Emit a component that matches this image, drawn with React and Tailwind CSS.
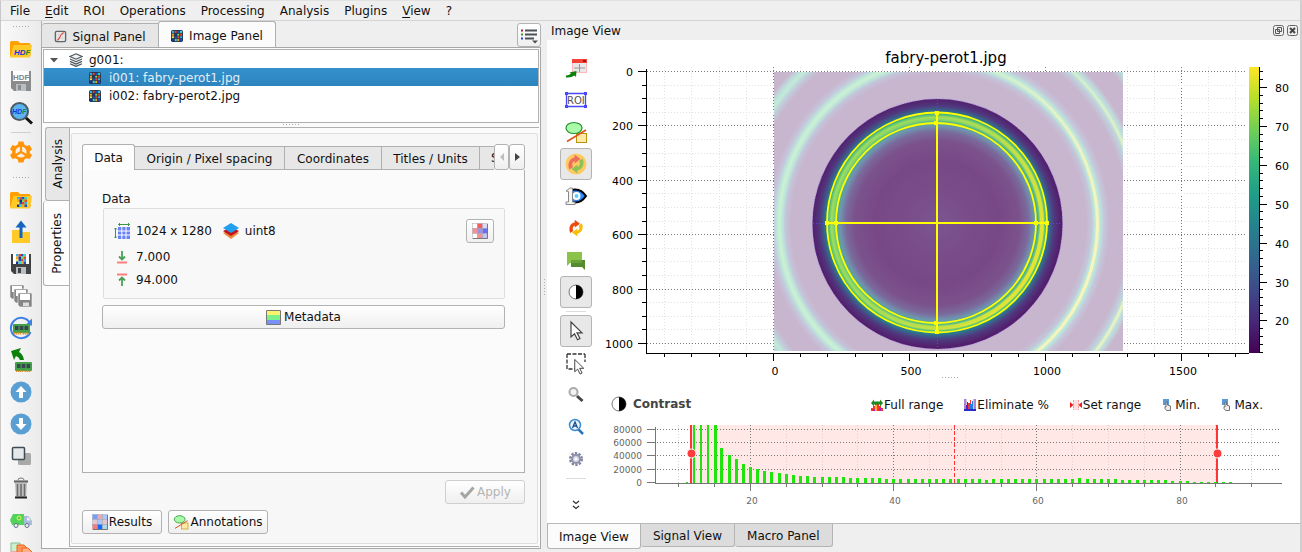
import React, { useState } from 'react';
import clsx from 'clsx';

const range = (n, from = 0) => Array.from({ length: n }, (_, i) => i + from);

const Icon = ({ size = 24, box = 24, className, children }) => (
  <svg width={size} height={size} viewBox={`0 0 ${box} ${box}`} className={clsx('shrink-0', className)} fill="none" aria-hidden="true">
    {children}
  </svg>
);

const MOSAIC = ['#2fb4e8', '#e8442f', '#1d4fc4', '#3ad6d0', '#f5a623', '#1c2f8f', '#6fe04b', '#e8442f', '#f7e04a', '#1d4fc4', '#e8442f', '#2fb4e8', '#1c2f8f', '#3ad6d0', '#f5a623', '#1d4fc4'];

const Mosaic = ({ x = 0, y = 0, cell = 3 }) =>
  MOSAIC.map((c, i) => <rect key={i} x={x + (i % 4) * cell} y={y + Math.floor(i / 4) * cell} width={cell} height={cell} fill={c} />);

/* ---- small icons ---- */

const SignalIcon = () => (
  <Icon size={13} box={14}>
    <rect x="1.5" y="1.5" width="11" height="11" rx="1.5" fill="#ececec" stroke="#5d666c" strokeWidth="1.5" />
    <path d="M5 2v10M9 2v10M2 5h10M2 9h10" stroke="#cfcfcf" strokeWidth=".6" />
    <path d="M3 11c4 0 3-8 8-8" stroke="#e8483c" strokeWidth="1.2" />
  </Icon>
);

const ImageIcon = () => (
  <Icon size={12} box={14}>
    <rect width="14" height="14" rx="2" fill="#23324a" />
    <Mosaic x={1} y={1} />
    <path d="M1 4h12M1 7h12M1 10h12M4 1v12M7 1v12M10 1v12" stroke="#23324a" strokeWidth=".7" />
  </Icon>
);

const LayersIcon = () => (
  <Icon size={14} box={14}>
    <path d="M7 .8l6 2.7-6 2.7-6-2.7zM1 6l6 2.7L13 6M1 8.4l6 2.7 6-2.7M1 10.7l6 2.7 6-2.7" stroke="#4c565c" strokeWidth="1.2" fill="#f2f2f2" />
  </Icon>
);

const ListIcon = () => (
  <Icon size={18} box={18}>
    <path d="M5 4.5h12M5 8.5h12M5 12.5h9" stroke="#4b5257" strokeWidth="2" />
    <path d="M1 4.5h2" stroke="#b01c2e" strokeWidth="2" />
    <path d="M1 8.5h2" stroke="#2aa02a" strokeWidth="2" />
    <path d="M1 12.5h2" stroke="#2c3ce0" strokeWidth="2" />
    <path d="M12 14.5h6l-3 3z" fill="#4b5257" />
  </Icon>
);

const ContrastIcon = ({ size = 16 }) => (
  <Icon size={size} box={16}>
    <circle cx="8" cy="8" r="7" fill="#fff" stroke="#777" />
    <path d="M8 1a7 7 0 0 1 0 14z" fill="#000" />
  </Icon>
);

const ShapeIcon = () => (
  <>
    <rect x="12.500" y="13.500" width="10" height="9" fill="#ffe9a8" stroke="#b8940c" />
    <ellipse cx="10" cy="8" rx="8" ry="5.500" fill="#a9fbaa" stroke="#23902c" strokeWidth="1.200" />
    <path d="M3 21.500L22 10" stroke="#d9541e" strokeWidth="1.500" />
  </>
);

const CycleIcon = ({ a, b }) => (
  <>
    <path d="M5.500 17.500C3.500 14 4 7 10.500 5.500V2.500L16.500 7l-6 4.500V9C8 10 7.500 12.500 9 15z" fill={a} />
    <path d="M18.500 6.500c2 3.500 1.500 10.500-5 12v3L7.500 17l6-4.500V15c2.500-1 3-3.500 1.500-6z" fill={b} />
  </>
);

const RamIcon = () => (
  <>
    <rect x="4" y="8" width="17" height="9" rx="1" fill="#43a047" />
    <path d="M6 10h3.500v4H6zM10.800 10h3.500v4h-3.500zM15.600 10h3.500v4h-3.500z" fill="#37474f" />
    <path d="M5 17.500h7M13.500 17.500H20" stroke="#e0912b" strokeWidth="2" strokeDasharray="1.500 .5" />
  </>
);

const Folder = () => (
  <>
    <path d="M1 5.500Q1 4 2.500 4H9l2 2h9q1.500 0 1.500 1.500V19H1z" fill="#ffa000" />
    <path d="M4.500 8H23l-2 12.500H1z" fill="#ffca28" />
  </>
);

const HdfText = ({ x, y, size = 8 }) => (
  <g fontFamily="Liberation Sans" fontStyle="italic" fontWeight="bold" fontSize={size}>
    <text x={x} y={y} fill="#1635e0">HD<tspan fill="#1b8a2c">F</tspan></text>
  </g>
);

const Floppy = ({ fill = '#424242', children }) => (
  <>
    <path d="M2 2h20v20H5l-3-3z" fill={fill} />
    <rect x="4" y="2" width="16" height="10" fill="#fff" />
    <rect x="7" y="15" width="10" height="7" fill="#b9bec2" />
    <rect x="9" y="16" width="3" height="5" fill={fill} />
    {children}
  </>
);

/* ---- main toolbar ---- */

const FILE_TOOLS = [
  ['Open HDF5', <><Folder /><HdfText x={5} y={18} size={8} /></>],
  ['Save HDF5', <Floppy fill="#8b8b8b"><text x="4" y="10.500" fontFamily="Liberation Sans" fontWeight="bold" fontSize="8" fill="#858585">HDF</text></Floppy>],
  ['Browse HDF5', <>
    <path d="M16 16l7 6.500" stroke="#111" strokeWidth="3" />
    <circle cx="10.500" cy="10.500" r="8.500" fill="#5bb4f0" stroke="#4d5a61" strokeWidth="2" />
    <HdfText x={3} y={13} size={7} />
  </>],
];

const SETTINGS_TOOLS = [
  ['Settings', <>
    <path d="M9.500 1.500h5l.7 3 2.500 1.400 2.900-.9 2.400 4.200-2.200 2v1.700l2.200 2-2.400 4.200-2.900-.9-2.500 1.400-.7 3h-5l-.7-3-2.500-1.400-2.900.9L1 14.900l2.200-2v-1.700L1 9.200 3.400 5l2.900.9 2.500-1.400z" fill="#ff9408" />
    <circle cx="12" cy="12" r="5.500" fill="#f3efe8" />
    <path d="M12 12V6M12 12l5 3M12 12l-5 3" stroke="#ff9408" strokeWidth="2.200" />
  </>],
];

const DATA_TOOLS = [
  ['Open image', <><Folder /><Mosaic x={8} y={9} cell={2.5} /></>],
  ['Import', <>
    <path d="M3 10h8l2 2h8v11H3z" fill="#ffca28" />
    <path d="M12 18V5" stroke="#1565c0" strokeWidth="3" />
    <path d="M6.500 7.500L12 .500l5.500 7z" fill="#1565c0" />
  </>],
  ['Save image', <Floppy><Mosaic x={7} y={2} cell={2.5} /></Floppy>],
  ['Save all', <>
    {[1, 5, 9].map((o) => (
      <g key={o} transform={`translate(${o} ${o})`}>
        <path d="M0 0h14v14H2l-2-2z" fill="#858585" stroke="#f5f5f5" strokeWidth=".6" />
        <path d="M2 1h10v6H2z" fill="#fff" />
        <path d="M5 9.500h6V13H5z" fill="#ddd" />
      </g>
    ))}
  </>],
  ['Memory', <>
    <path d="M21 7A10.200 10.200 0 1 0 21.500 16" stroke="#3f7fe8" strokeWidth="2" />
    <path d="M23 2.500v7h-7z" fill="#3f7fe8" />
    <RamIcon />
  </>],
  ['Load memory', <>
    <g transform="translate(2 6)"><RamIcon /></g>
    <path d="M2 3l10-3-2 4q4 2 5 8h-4q-1-3-4-4l-2 4z" fill="#0b800b" />
  </>],
  ['Move up', <>
    <circle cx="12" cy="12" r="10.500" fill="#5a9fd4" />
    <path d="M12 18V9" stroke="#fff" strokeWidth="4" /><path d="M6.500 12L12 6l5.500 6z" fill="#fff" />
  </>],
  ['Move down', <>
    <circle cx="12" cy="12" r="10.500" fill="#5a9fd4" />
    <path d="M12 6v9" stroke="#fff" strokeWidth="4" /><path d="M6.500 12l5.500 6 5.500-6z" fill="#fff" />
  </>],
  ['Duplicate', <>
    <rect x="9" y="9" width="13" height="12" rx="1.500" fill="#a9a9a9" />
    <rect x="3.500" y="3.500" width="12" height="12" rx="1" fill="#e4e8ea" stroke="#3f4c53" strokeWidth="1.500" />
  </>],
  ['Delete', <>
    <path d="M9 4q0-2 3-2t3 2" stroke="#777" /><path d="M5 5.500h14" stroke="#666" strokeWidth="2.200" />
    <path d="M6 7h12l-.8 14H6.800z" fill="#bdbdbd" />
    <path d="M8.500 8v12M12 8v12M15.500 8v12" stroke="#6b6b6b" strokeWidth="1.500" />
    <path d="M6 21.500h12" stroke="#222" strokeWidth="2" />
  </>],
  ['Delete all', <>
    <path d="M1 12l3-6h11v11H3z" fill="#52d45a" />
    <circle cx="10" cy="10" r="2" stroke="#e5f05a" />
    <path d="M15 8h4.500l3.500 5v4h-8z" fill="#a9bdd8" /><path d="M18 9.500h1.500l2 3H18z" fill="#eef4fb" />
    <circle cx="7" cy="17.500" r="2" fill="#eee" stroke="#60708c" /><circle cx="18" cy="17.500" r="2" fill="#eee" stroke="#60708c" />
  </>],
  ['Copy titles', <>
    <path d="M2 3h9v9H2z" fill="#c9f2cd" stroke="#8b9" /><path d="M2 11h6v8H2z" fill="#f7a8a8" />
    <path d="M8 5h7l3 3v14H8z" fill="#ff9658" stroke="#e8641c" /><path d="M13 8h6l4 4v10H13z" fill="#ffb184" stroke="#e8641c" />
  </>],
];

const ToolHandle = () => (
  <div className="flex shrink-0 items-center justify-center">
    <span className="h-[4px] w-[18px] bg-[radial-gradient(#a8a8a8_0.6px,transparent_0.8px)] bg-[length:3px_3px]" />
  </div>
);

const ToolGroup = ({ tools }) =>
  tools.map(([label, art]) => (
    <button key={label} type="button" aria-label={label} className="flex h-8 w-full shrink-0 items-center justify-center">
      <Icon>{art}</Icon>
    </button>
  ));

const MainToolbar = () => (
  <div role="toolbar" className="flex w-10 shrink-0 flex-col overflow-hidden bg-linear-to-r from-[#f9f9f9] to-[#ebebeb]">
    <div className="grid h-3 shrink-0"><ToolHandle /></div>
    <ToolGroup tools={FILE_TOOLS} />
    <div className="flex h-[7px] shrink-0 items-center px-[10px]"><span className="h-px w-full bg-[#cfcfcf]" /></div>
    <ToolGroup tools={SETTINGS_TOOLS} />
    <div className="grid h-4 shrink-0 pt-1"><ToolHandle /></div>
    <ToolGroup tools={DATA_TOOLS} />
  </div>
);

/* ---- menu ---- */

const MENUS = ['File', 'Edit', 'ROI', 'Operations', 'Processing', 'Analysis', 'Plugins', 'View', '?'];

const MenuBar = () => (
  <nav className="flex h-5 shrink-0 items-center gap-[15px] border-b border-[#d4d4d4] px-[9px]">
    {MENUS.map((m) => (
      <button key={m} type="button">
        {m === 'Edit' || m === 'View' ? <><u className="underline-offset-2">{m[0]}</u>{m.slice(1)}</> : m}
      </button>
    ))}
  </nav>
);

/* ---- left dock ---- */

const TreeRow = ({ label, selected, onClick }) => (
  <li>
    <button
      type="button"
      onClick={onClick}
      className={clsx('flex h-[18px] w-full items-center gap-2 pt-0.5 pl-[45px] text-left', selected && 'bg-linear-to-b from-[#3491cd] to-[#2c84bd] text-[#e3eef6]')}
    >
      <ImageIcon />
      {label}
    </button>
  </li>
);

const ObjectTree = () => {
  const [current, setCurrent] = useState(0);
  return (
    <ul className="h-[74px] shrink-0 border border-[#b0b0b0] bg-white">
      <li className="flex h-[18px] items-center pt-0.5 pl-[6px]">
        <svg width="8" height="5" className="mr-[11px]"><path d="M0 0h8L4 4.500z" fill="#555" /></svg>
        <LayersIcon />
        <span className="pl-[6px]">g001:</span>
      </li>
      {['i001: fabry-perot1.jpg', 'i002: fabry-perot2.jpg'].map((label, i) => (
        <TreeRow key={label} label={label} selected={i === current} onClick={() => setCurrent(i)} />
      ))}
    </ul>
  );
};

const RaisedButton = ({ className, children, ...props }) => (
  <button
    type="button"
    className={clsx('flex h-6 items-center justify-center rounded-[3px] border border-[#b2b2b2] bg-linear-to-b from-white to-[#efefef]', className)}
    {...props}
  >
    {children}
  </button>
);

const GridIcon = ({ colors, size = 16 }) => (
  <Icon size={size} box={16}>
    {colors.map((c, i) => <rect key={i} x={(i % 3) * 5 + 0.5} y={Math.floor(i / 3) * 5 + 0.5} width="5" height="5" fill={c} stroke="#9a9aa8" strokeWidth=".4" />)}
    <path d="M1 15.500h14.500V1" stroke="#777" />
  </Icon>
);

const DataTab = () => (
  <div className="flex flex-1 flex-col border border-t-0 border-[#b0b0b0] bg-[#fbfbfb] px-[19px] pt-5">
    <span className="flex h-[18px] items-center">Data</span>
    <div className="ml-px flex h-[91px] justify-between rounded-[2px] border border-[#dedede] bg-[#f8f8f8] px-[10px] pt-[10px]">
      <div className="flex flex-col">
        <div className="flex h-[24px] items-center gap-[6px]">
          <Icon size={16} box={16}>
            <path d="M4 4h12v12H4z" fill="#6a82f8" />
            <path d="M7.800 4v12M12 4v12M4 8h12M4 12h12" stroke="#fff" />
            <path d="M4.500 1.500h11M6 0L4.500 1.500 6 3M14 0l1.500 1.500L14 3M1.500 5v10M0 6.500L1.500 5 3 6.500M0 13.500L1.500 15 3 13.500" stroke="#3d9550" />
          </Icon>
          <span>1024 x 1280</span>
          <Icon size={16} box={16} className="ml-[5px]">
            <path d="M0 10l8-4 8 4-8 6z" fill="#e98a3c" />
            <path d="M0 8l8-4 8 4-8 5z" fill="#c4111a" />
            <path d="M0 5l8-5 8 5-8 5z" fill="#22a0ee" />
          </Icon>
          <span>uint8</span>
        </div>
        <div className="flex h-[28px] items-center gap-[6px]">
          <Icon size={16} box={16}>
            <path d="M3 13.500h10" stroke="#ff7f7f" strokeWidth="2" /><path d="M8 2v9M5 7.500l3 3 3-3" stroke="#4a9e57" strokeWidth="1.800" />
          </Icon>
          7.000
        </div>
        <div className="flex h-[18px] items-center gap-[6px]">
          <Icon size={16} box={16}>
            <path d="M3 2.500h10" stroke="#ff7f7f" strokeWidth="2" /><path d="M8 14V5M5 8.500l3-3 3 3" stroke="#4a9e57" strokeWidth="1.800" />
          </Icon>
          94.000
        </div>
      </div>
      <RaisedButton className="w-7" aria-label="View array">
        <GridIcon colors={['#fff', '#f75b5b', '#d9d9f8', '#f79090', '#9a93ea', '#6c6cf5', '#fff', '#f79090', '#c3c3fa']} />
      </RaisedButton>
    </div>
    <RaisedButton className="mt-[6px] w-full gap-[3px]">
      <Icon size={15} box={15}>
        <path d="M.5.500h14v4.500H.5z" fill="#fbf36a" /><path d="M.5 5h14v5H.5z" fill="#7cf08a" /><path d="M.5 10h14v4.500H.5z" fill="#7a8ff8" />
        <path d="M.5.500h14v14H.5z" stroke="#777" />
      </Icon>
      Metadata
    </RaisedButton>
  </div>
);

const TABS = [
  ['Origin / Pixel spacing', 'w-[150px]'],
  ['Coordinates', 'w-[97px]'],
  ['Titles / Units', 'w-[98px]'],
];

const PropertiesPane = () => (
  <div className="mt-[5px] mb-[2px] ml-px mr-px flex flex-1 flex-col rounded-[2px] border border-[#dedede] bg-[#f7f7f7] pt-[10px] pr-3 pb-[9px] pl-[10px]">
    <div role="tablist" className="flex h-[26px] items-end">
      <button type="button" role="tab" className="h-[26px] w-[53px] shrink-0 rounded-t-[3px] border border-b-0 border-[#b0b0b0] bg-[#fdfdfd]">
        Data
      </button>
      {TABS.map(([t, width]) => (
        <button key={t} type="button" role="tab" className={clsx('h-6 shrink-0 border-t border-r border-b border-[#b0b0b0] bg-[#e7e7e7] pt-px', width)}>
          {t}
        </button>
      ))}
      <button type="button" role="tab" className="flex h-6 min-w-0 flex-1 items-center overflow-hidden border-t border-b border-[#b0b0b0] bg-[#e7e7e7] pl-[11px]">S</button>
      <RaisedButton className="h-[26px] w-[15px] shrink-0" aria-label="Previous tab">
        <svg width="4" height="8"><path d="M4 0v8L0 4z" fill="#bdbdbd" /></svg>
      </RaisedButton>
      <RaisedButton className="h-[26px] w-4 shrink-0" aria-label="Next tab">
        <svg width="5" height="8"><path d="M0 0v8l5-4z" fill="#444" /></svg>
      </RaisedButton>
    </div>
    <DataTab />
    <div className="flex justify-end pt-[7px]">
      <RaisedButton disabled className="w-20 gap-[2px] border-[#cfcfcf] text-[#b4b4b4]">
        <Icon size={16} box={16}><path d="M2 8.500L6 13 14.500 3.500" stroke="#a5a5a5" strokeWidth="3" /></Icon>
        Apply
      </RaisedButton>
    </div>
    <div className="flex gap-[6px] pt-[6px]">
      <RaisedButton className="w-20 gap-px">
        <GridIcon colors={['#6fa0f7', '#e9a9ad', '#a9c8fb', '#e5c8cd', '#a9c8fb', '#e5c8cd', '#f77b7b', '#0d6bff', '#add8e6']} />
        Results
      </RaisedButton>
      <RaisedButton className="w-[100px] gap-px">
        <Icon size={16}><ShapeIcon /></Icon>
        Annotations
      </RaisedButton>
    </div>
  </div>
);

const SideTabs = () => (
  <div role="tablist" className="flex w-[26px] shrink-0 flex-col items-end">
    <button type="button" role="tab" className="flex h-[74px] w-6 items-center justify-center rounded-l-[3px] border border-r-0 border-[#b0b0b0] bg-[#e7e7e7]">
      <span className="rotate-180 [writing-mode:vertical-rl]">Analysis</span>
    </button>
    <button type="button" role="tab" className="flex h-[85px] w-full items-center justify-center rounded-l-[3px] border border-t-0 border-r-0 border-[#b0b0b0] bg-[#fdfdfd]">
      <span className="rotate-180 [writing-mode:vertical-rl]">Properties</span>
    </button>
  </div>
);

const LeftDock = () => (
  <div className="flex w-[500px] shrink-0 flex-col pb-[3px]">
    <div className="flex h-[26px] items-end justify-between border-l border-[#b0b0b0]">
      <div role="tablist" className="flex items-end">
        <button type="button" role="tab" className="flex h-6 w-[116px] items-center justify-center gap-[5px] rounded-tl-[3px] border-t border-[#b0b0b0] bg-[#e6e6e6] pt-0.5">
          <SignalIcon />
          Signal Panel
        </button>
        <button type="button" role="tab" className="flex h-[26px] w-[118px] items-center justify-center gap-[6px] rounded-t-[3px] border border-b-0 border-[#b0b0b0] bg-[#fbfbfb] pt-0.5">
          <ImageIcon />
          Image Panel
        </button>
      </div>
      <RaisedButton className="w-6" aria-label="Panel menu"><ListIcon /></RaisedButton>
    </div>
    <div className="flex flex-1 flex-col border border-[#a8a8a8] bg-[#fbfbfb] p-px">
      <ObjectTree />
      <div className="grid h-1 shrink-0"><ToolHandle /></div>
      <div className="flex flex-1">
        <SideTabs />
        <div className="flex min-w-0 flex-1 flex-col border border-r-0 border-[#b0b0b0]">
          <PropertiesPane />
        </div>
      </div>
    </div>
  </div>
);

/* ---- image view toolbar ---- */

const Pointer = () => <path d="M7 3v15l3.500-3.200 3 6 2.500-1.300-3-5.700H18z" fill="#fff" stroke="#444" strokeWidth="1.200" />;

const VIEW_TOOLS = [
  ['New window', <>
    <rect x="8.500" y="3.500" width="14" height="13" fill="#e8e8e8" stroke="#ffb8bc" /><path d="M8 3h15v4H8z" fill="#f44336" />
    <path d="M19 4h3v2h-3z" fill="#a01010" /><path d="M15.500 8v8M10 12h11" stroke="#999" />
    <path d="M2 19.500q3 0 5-2L5.500 16.500 12.500 15l-.5 6-1.500-1.500Q7 22 2 21.500z" fill="#0b800b" />
  </>],
  ['ROI', <>
    <path d="M2.500 5.500h19v13h-19z" stroke="#4848ff" strokeWidth="1.300" />
    <path d="M1 4h3v3H1zM20 4h3v3h-3zM1 17h3v3H1zM20 17h3v3h-3z" fill="#4848ff" />
    <text x="3" y="16" fontFamily="DejaVu Sans" fontSize="10" fill="#555">ROI</text>
  </>],
  ['Annotations', <ShapeIcon />],
  ['Auto refresh', <><circle cx="12" cy="12" r="10.500" fill="#ffca64" /><CycleIcon a="#ee6e5e" b="#8fc155" /></>, true],
  ['Show first only', <>
    <path d="M6 6.500q10-3.500 16 5.500-6 9-16 5.500z" fill="#2f86f6" stroke="#000" strokeWidth="2" />
    <circle cx="12.500" cy="12" r="3" fill="#5ad0f8" stroke="#fff" strokeWidth="2" />
    <path d="M2 7l4-3h2.500v14H11v2.500H2V18h2.500V7.500z" fill="#f4f4f4" stroke="#888" />
  </>],
  ['Refresh', <g transform="translate(1.500 1.500) scale(.88)"><CycleIcon a="#ee4a0c" b="#f9bd06" /></g>],
  ['Labels', <>
    <path d="M3 4h15v11H6l-3 3z" fill="#8bc34a" /><path d="M7 12h14v10l-3-3H7z" fill="#558b2f" /><path d="M7 12h11v3H7z" fill="#6c9f3a" />
  </>],
  ['Contrast', <g transform="translate(4 4)"><circle cx="8" cy="8" r="7" fill="#fff" stroke="#777" /><path d="M8 1a7 7 0 0 1 0 14z" fill="#000" /></g>, true],
  null,
  ['Select', <Pointer />, true],
  ['Rectangle selection', <>
    <path d="M3 3h18M3 3v15h8M21 3v8" stroke="#333" strokeWidth="1.300" strokeDasharray="4 1.500" />
    <g transform="translate(5 6) scale(.82)"><Pointer /></g>
  </>],
  ['Zoom', <><path d="M13 13l5.500 5" stroke="#444" strokeWidth="3" /><circle cx="9.500" cy="9" r="4" fill="#f3f3f3" stroke="#aaa" strokeWidth="2" /></>],
  ['Auto scale', <>
    <path d="M14 14l5 5" stroke="#2a75bb" strokeWidth="2.500" /><circle cx="11" cy="10" r="5.500" fill="#eaf4fd" stroke="#3d8bd0" strokeWidth="1.500" />
    <path d="M8.500 13l2.500-6 2.500 6M9.500 11h3" stroke="#1d4f86" strokeWidth="1.300" />
  </>],
  ['Parameters', <>
    <circle cx="12" cy="12" r="5.500" stroke="#8085a0" strokeWidth="3" strokeDasharray="2.200 1.255" />
    <circle cx="12" cy="12" r="4" fill="#d6d8e6" stroke="#8f93ac" strokeWidth="2" /><circle cx="12" cy="12" r="1.500" fill="#fff" />
  </>],
  null,
];

const ViewToolbar = () => (
  <div role="toolbar" className="flex w-[53px] shrink-0 flex-col pt-3 pr-2 pl-[13px]">
    {VIEW_TOOLS.map((tool, i) =>
      tool ? (
        <button key={tool[0]} type="button" aria-label={tool[0]} className={clsx('flex h-8 w-8 shrink-0 items-center justify-center', tool[2] && 'rounded-[3px] border border-[#b4b4b4] bg-[#e8e8e8]')}>
          <Icon>{tool[1]}</Icon>
        </button>
      ) : (
        <div key={i} className="flex h-[7px] w-8 shrink-0 items-center px-[6px]"><span className="h-px w-full bg-[#dcdcdc]" /></div>
      )
    )}
    <button type="button" aria-label="More" className="flex h-12 w-8 items-center justify-center pt-1">
      <Icon size={10} box={10}><path d="M2 1l3 2.500L8 1M2 6l3 2.500L8 6" stroke="#333" strokeWidth="1.300" /></Icon>
    </button>
  </div>
);

/* ---- image plot ---- */

const px = (v) => Math.round(773 + v * 0.272);
const py = (v) => Math.round(71 + v * 0.272);
const pz = (v) => Math.round(87 + (80 - v) * 3.89);

const VIRIDIS = ['#fde725', '#b5de2b', '#6ece58', '#35b779', '#1f9e89', '#26828e', '#31688e', '#3e4a89', '#482878', '#440154'];

const FRINGES = [
  [0, '#c8b5ce'], [0.6, '#c8b5ce'], [0.625, '#c3c6da'], [0.636, '#bce3da'], [0.65, '#cdf1d2'], [0.662, '#bce5da'], [0.675, '#c5c8dc'], [0.7, '#c8b5ce'],
  [0.775, '#c8b5ce'], [0.8, '#c1cedc'], [0.818, '#c0ecd6'], [0.833, '#bfdcdc'], [0.855, '#c8b5ce'],
  [0.93, '#c8b5ce'], [0.965, '#b8e6da'], [1, '#c8b5ce'],
];

const DISC = [
  [0, '#7b5590'], [0.25, '#794d89'], [0.5, '#784886'], [0.66, '#7b528c'], [0.73, '#7a6a9c'], [0.775, '#6f95ae'], [0.805, '#48ae94'],
  [0.825, '#7fd36b'], [0.845, '#a0dd5c'], [0.865, '#58c377'], [0.885, '#26828e'], [0.91, '#3e5a89'], [0.94, '#50387e'], [1, '#541c6a'],
];

const ImagePlot = () => (
  <svg viewBox="600 40 700 336" className="block w-full overflow-visible" shapeRendering="crispEdges" fontFamily="DejaVu Sans, sans-serif" fontSize="11">
    <defs>
      <radialGradient id="fringes" gradientUnits="userSpaceOnUse" cx="938.500" cy="219" r="245" gradientTransform="scale(1 1.022)">
        {FRINGES.map(([o, c]) => <stop key={o} offset={o} stopColor={c} />)}
      </radialGradient>
      <radialGradient id="disc" gradientUnits="userSpaceOnUse" cx="937" cy="223" r="125">
        {DISC.map(([o, c]) => <stop key={o} offset={o} stopColor={c} />)}
      </radialGradient>
      <linearGradient id="glow" x1="0" y1="0.200" x2="1" y2="0.700">
        <stop offset="0.300" stopColor="#fde725" stopOpacity="0" />
        <stop offset="1" stopColor="#fde725" stopOpacity="0.800" />
      </linearGradient>
      <linearGradient id="halo" x1="0" y1="0.300" x2="1" y2="0.600">
        <stop offset="0.500" stopColor="#fff5b8" stopOpacity="0" />
        <stop offset="1" stopColor="#fff5b8" stopOpacity="0.900" />
      </linearGradient>
      <linearGradient id="viridis" x1="0" y1="0" x2="0" y2="1">
        {VIRIDIS.map((c, i) => <stop key={c} offset={i / 9} stopColor={c} />)}
      </linearGradient>
      <clipPath id="frame"><rect x="774" y="72" width="349" height="279" /></clipPath>
    </defs>

    <text x="946" y="63" fontSize="15" textAnchor="middle">fabry-perot1.jpg</text>

    {range(22, -4).map((k) => (
      <path key={k} d={`M${px(k * 100) + 0.5} 67V351`} stroke={k % 5 ? '#e2e2e2' : '#777'} strokeDasharray="1 2" />
    ))}
    {range(21).map((k) => (
      <path key={k} d={`M647 ${py(k * 50) + 0.5}H1247`} stroke={k % 4 ? '#e2e2e2' : '#777'} strokeDasharray="1 2" />
    ))}

    <g shapeRendering="geometricPrecision">
      <rect x="774" y="72" width="349" height="279" fill="url(#fringes)" />
      <g clipPath="url(#frame)" fill="none" stroke="url(#halo)" strokeWidth="3">
        <ellipse cx="938.500" cy="224" rx="159" ry="162.500" />
        <ellipse cx="938.500" cy="224" rx="200.500" ry="205" strokeOpacity=".7" />
      </g>
      <circle cx="937.500" cy="224" r="125" fill="url(#disc)" stroke="#6a5ae0" strokeWidth="0.800" strokeDasharray="1 2" />
      <circle cx="937" cy="223" r="105" fill="none" stroke="url(#glow)" strokeWidth="4" />
      <path d="M937.500 100V349M813 223.500H1062" stroke="#5a4ad0" strokeDasharray="1 2" />
      <g fill="none" stroke="#ffff00" strokeWidth="1.800">
        <circle cx="937" cy="222.500" r="110" />
        <circle cx="936" cy="223" r="100" />
      </g>
    </g>
    <path d="M937 112V332M827 223H1047" stroke="#ffff00" strokeWidth="2" />
    {[[937, 113], [936, 123], [936, 323], [937, 332], [827, 223], [836, 223], [1036, 223], [1047, 223]].map(([x, y]) => (
      <rect key={`${x}-${y}`} x={x - 2} y={y - 2} width="4" height="4" fill="#ffff00" />
    ))}

    <g stroke="#000">
      <path d="M646.500 69V354M646 353.500H1249" />
      {range(22, -4).map((k) => <path key={k} d={`M${px(k * 100) + 0.5} 354v${k % 5 ? 3 : 7}`} />)}
      {range(21).map((k) => <path key={k} d={`M646 ${py(k * 50) + 0.5}h${k % 4 ? -4 : -8}`} />)}
    </g>
    {range(6).map((k) => <text key={k} x="633" y={py(k * 200) + 5} textAnchor="end">{k * 200}</text>)}
    {range(4).map((k) => <text key={k} x={px(k * 500) + 2} y="375" textAnchor="middle">{k * 500}</text>)}

    <rect x="1249" y="67" width="10" height="286" fill="url(#viridis)" />
    <path d="M1259.500 67V353" stroke="#000" />
    {range(37, 6).map((k) => <path key={k} d={`M1260 ${pz(k * 2) + 0.5}h${k % 5 ? 3 : 7}`} stroke="#000" />)}
    {range(7, 2).map((k) => <text key={k} x="1275" y={pz(k * 10) + 5}>{k * 10}</text>)}
  </svg>
);

/* ---- contrast histogram ---- */

const hx = (v) => Math.round(750 + (v - 20) * 7.16);

const HISTOGRAM = [
  1, 58, 58, 58, 58, 35, 28, 24, 19, 16, 14, 12, 11, 10, 9, 8, 7, 7, 6, 6, 6, 6, 6, 5, 5, 5, 5, 5, 4, 4, 4, 4, 4, 4, 4, 4, 4, 4, 4,
  4, 4, 4, 3, 4, 4, 4, 4, 4, 4, 4, 4, 4, 4, 4, 4, 5, 4, 4, 4, 4, 4, 3, 3, 3, 3, 3, 3, 3, 2, 2, 2, 1, 1, 1, 1, 1, 1,
];

const LEVELS = [[80000, 429], [60000, 442], [40000, 455], [20000, 469], [0, 482]];

const Histogram = () => (
  <svg viewBox="600 424 700 88" className="block w-full" shapeRendering="crispEdges" fontFamily="DejaVu Sans, sans-serif" fontSize="9" fill="#666">
    <rect x="691" y="425" width="526" height="58" fill="#ffe8e6" />
    {range(17, 2).map((k) => (
      <path key={k} d={`M${hx(k * 5) + 0.5} 425V483`} stroke={k % 4 ? '#dcd0d0' : '#777'} strokeDasharray="1 2" />
    ))}
    {LEVELS.slice(0, 4).map(([v, y]) => <path key={v} d={`M657 ${y + 0.5}H1280`} stroke="#777" strokeDasharray="1 2" />)}
    <path d="M954.500 425V483" stroke="#ff3333" strokeDasharray="4 2" />
    <path d="M691 425V483M1217 425V483" stroke="#ff3333" strokeWidth="2" />
    {HISTOGRAM.map((h, i) => <rect key={i} x={hx(i + 11) - (i > 4 ? 1 : 0)} y={483 - h} width={i > 3 ? 3 : 2} height={h} fill="#1ee60c" />)}
    <g stroke="#777">
      <path d="M655.500 427V484M655 483.500H1282" />
      {range(17, 2).map((k) => <path key={k} d={`M${hx(k * 5) + 0.5} 484v${k % 4 ? 3 : 7}`} />)}
      {LEVELS.map(([v, y]) => <path key={v} d={`M647 ${y + 0.5}h8`} />)}
    </g>
    <g shapeRendering="geometricPrecision" fill="#ff3c3c" stroke="#fff">
      <circle cx="691.500" cy="453.500" r="4.500" />
      <circle cx="1217.500" cy="453.500" r="4.500" />
    </g>
    {LEVELS.map(([v, y]) => <text key={v} x="642" y={y + 4} textAnchor="end">{v}</text>)}
    {[20, 40, 60, 80].map((v) => <text key={v} x={hx(v) + 2} y="504" textAnchor="middle">{v}</text>)}
  </svg>
);

const HAND = (
  <>
    <rect x="1" width="6" height="6" fill="#5a9ad8" />
    <path d="M4 3v5l-1-.5v2L4.500 11.500h4V7L5.500 6V3z" fill="#eee" stroke="#666" strokeWidth=".9" />
  </>
);

const CONTRAST_ACTIONS = [
  ['Full range', <>
    <path d="M0 12V9h2V7h2V5h4v2h2v2h2v3z" fill="#f2372c" /><path d="M4 12V6h2v6z" fill="#ffa726" /><path d="M2 12v-2h2v2zM8 12V9h2v3z" fill="#b01ce0" />
    <path d="M0 4l3-3.500v2h6v-2L12 4 9 7.500v-2H3v2z" fill="#1d8a1d" />
  </>],
  ['Eliminate %', <>
    <path d="M0 0h2.500v12H0zM9.500 0H12v12H9.500z" fill="#a888c8" />
    <path d="M2 12V6h1V3h1v9z" fill="#5a1cc0" /><path d="M4 12V4h2V1h1v11z" fill="#f2372c" /><path d="M6 12V5h2V2h1v10z" fill="#1c7cf0" /><path d="M0 12v-2h12v2z" fill="#2c28c8" />
  </>],
  ['Set range', <>
    <path d="M3 1h6v10H3z" fill="#ffdede" /><path d="M3.500 1v10M8.500 1v10" stroke="#f99" strokeDasharray="2 1" />
    <path d="M0 3l3.500 3L0 9zM12 3L8.500 6l3.500 3z" fill="#f01c1c" />
  </>],
  ['Min.', HAND],
  ['Max.', HAND],
];

const ContrastPanel = () => (
  <section>
    <div className="flex h-11 items-center justify-between pt-1 pr-[37px] pl-[11px]">
      <h2 className="flex items-center gap-[6px] font-bold text-[#444]"><ContrastIcon />Contrast</h2>
      <div className="flex gap-[21px] pt-px">
        {CONTRAST_ACTIONS.map(([label, art]) => (
          <button key={label} type="button" className="flex items-center gap-px">
            <Icon size={12} box={12}>{art}</Icon>
            {label}
          </button>
        ))}
      </div>
    </div>
    <Histogram />
  </section>
);

const VIEWS = ['Image View', 'Signal View', 'Macro Panel'];

const RightDock = () => (
  <div className="flex min-w-0 flex-1 flex-col">
    <div className="flex h-[19px] shrink-0 items-center justify-between pr-[2px] pl-1">
      <span>Image View</span>
      <div className="flex gap-[3px]">
        <button type="button" aria-label="Float">
          <Icon size={11} box={11}><rect x=".5" y=".5" width="10" height="10" rx="2" stroke="#666" /><path d="M4.500 2.500h4v4h-4zM2.500 4.500h4v4h-4z" stroke="#555" fill="#eee" /></Icon>
        </button>
        <button type="button" aria-label="Close">
          <Icon size={11} box={11}><rect x=".5" y=".5" width="10" height="10" rx="2" stroke="#666" /><path d="M3 3l5 5M8 3L3 8" stroke="#444" strokeWidth="2" /></Icon>
        </button>
      </div>
    </div>
    <div className="flex flex-1 overflow-hidden bg-white">
      <ViewToolbar />
      <div className="min-w-0 flex-1">
        <ImagePlot />
        <div className="grid h-1"><ToolHandle /></div>
        <ContrastPanel />
      </div>
    </div>
    <div role="tablist" className="flex h-[29px] shrink-0 items-start border-t border-[#b8b8b8]">
      {VIEWS.map((v, i) => (
        <button
          key={v}
          type="button"
          role="tab"
          className={clsx('rounded-b-[3px] border border-t-0 border-[#b4b4b4]', i === 0 ? 'h-[25px] bg-[#fbfbfb] px-[11px] pt-px' : 'h-[23px] border-l-0 bg-[#dcdcdc] px-3 pt-px')}
        >
          {v}
        </button>
      ))}
    </div>
  </div>
);

export default function App() {
  return (
    <div className="flex h-screen flex-col overflow-hidden border-t border-l border-r-2 border-t-[#e2e2e2] border-r-[#cfcfcf] border-l-[#c8c8c8] bg-[#efefef] font-['DejaVu_Sans',sans-serif] text-[12px] leading-4 text-[#111]">
      <MenuBar />
      <div className="flex min-h-0 flex-1">
        <MainToolbar />
        <LeftDock />
        <div className="flex w-[6px] shrink-0 items-center justify-center">
          <span className="h-[18px] w-[3px] bg-[radial-gradient(#b0b0b0_0.6px,transparent_0.8px)] bg-[length:3px_3px]" />
        </div>
        <RightDock />
      </div>
    </div>
  );
}
